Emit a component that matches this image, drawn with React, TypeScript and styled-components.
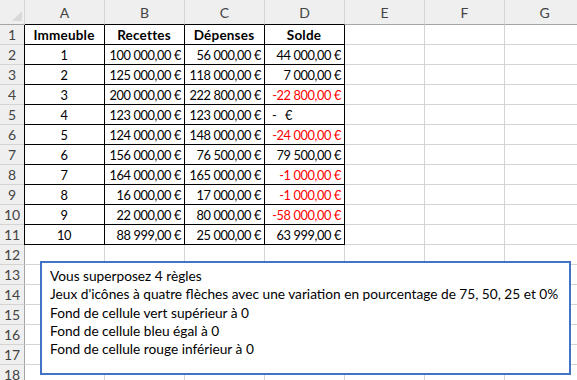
import { createGlobalStyle, styled } from 'styled-components';

const GlobalStyle = createGlobalStyle`
  html, body {
    margin: 0;
    padding: 0;
    background: #ffffff;
  }
  body {
    font-family: Lato, "Liberation Sans", sans-serif;
    overflow: hidden;
  }
`;

const COLS = ['A', 'B', 'C', 'D', 'E', 'F', 'G'];
const ROW_COUNT = 18;

type Value = { text: string; red?: boolean; dash?: boolean };

const header = ['Immeuble', 'Recettes', 'Dépenses', 'Solde'];

const data: Value[][] = [
  [{ text: '1' }, { text: '100 000,00 €' }, { text: '56 000,00 €' }, { text: '44 000,00 €' }],
  [{ text: '2' }, { text: '125 000,00 €' }, { text: '118 000,00 €' }, { text: '7 000,00 €' }],
  [{ text: '3' }, { text: '200 000,00 €' }, { text: '222 800,00 €' }, { text: '-22 800,00 €', red: true }],
  [{ text: '4' }, { text: '123 000,00 €' }, { text: '123 000,00 €' }, { text: '-   €', dash: true }],
  [{ text: '5' }, { text: '124 000,00 €' }, { text: '148 000,00 €' }, { text: '-24 000,00 €', red: true }],
  [{ text: '6' }, { text: '156 000,00 €' }, { text: '76 500,00 €' }, { text: '79 500,00 €' }],
  [{ text: '7' }, { text: '164 000,00 €' }, { text: '165 000,00 €' }, { text: '-1 000,00 €', red: true }],
  [{ text: '8' }, { text: '16 000,00 €' }, { text: '17 000,00 €' }, { text: '-1 000,00 €', red: true }],
  [{ text: '9' }, { text: '22 000,00 €' }, { text: '80 000,00 €' }, { text: '-58 000,00 €', red: true }],
  [{ text: '10' }, { text: '88 999,00 €' }, { text: '25 000,00 €' }, { text: '63 999,00 €' }],
];

const notes = [
  'Vous superposez 4 règles',
  "Jeux d'icônes à quatre flèches avec une variation en pourcentage de 75, 50, 25 et 0%",
  'Fond de cellule vert supérieur à 0',
  'Fond de cellule bleu égal à 0',
  'Fond de cellule rouge inférieur à 0',
];

const App = () => {
  const rows = Array.from({ length: ROW_COUNT }, (_, i) => i + 1);

  const renderCell = (row: number, col: number) => {
    const inTable = row <= 11 && col <= 3;
    const key = `${row}-${col}`;
    if (row === 1 && col <= 3) {
      return (
        <Cell key={key} $boxed $align="center" $bold $leftEdge={col === 0}>
          {header[col]}
        </Cell>
      );
    }
    if (inTable) {
      const v = data[row - 2][col];
      return (
        <Cell
          key={key}
          $boxed
          $align={col === 0 ? 'center' : v.dash ? 'left' : 'right'}
          $red={v.red}
          $leftEdge={col === 0}
        >
          {v.text}
        </Cell>
      );
    }
    return <Cell key={key} $boxed={false} $align="left" />;
  };

  return (
    <>
      <GlobalStyle />
      <Sheet>
        <Corner>
          <CornerMark />
        </Corner>
        {COLS.map((c, i) => (
          <ColHeader key={c} $dark={i <= 3}>
            {c}
          </ColHeader>
        ))}
        {rows.map((r) => [
          <RowHeader key={`h${r}`}>{r}</RowHeader>,
          ...COLS.map((_, c) => renderCell(r, c)),
        ])}
        <TextBox>
          {notes.map((n) => (
            <NoteLine key={n}>{n}</NoteLine>
          ))}
        </TextBox>
      </Sheet>
    </>
  );
};

export default App;

const Sheet = styled.div`
  position: relative;
  display: grid;
  grid-template-columns: 25px repeat(7, 80px);
  grid-template-rows: 25px repeat(18, 20px);
  width: 585px;
  color: #000000;
`;

const Corner = styled.div`
  position: relative;
  background: #efefef;
  border-right: 1px solid #d4d4d4;
  border-bottom: 1px solid #a5a5a5;
  box-sizing: border-box;
`;

const CornerMark = styled.div`
  position: absolute;
  right: 2px;
  bottom: 3px;
  width: 0;
  height: 0;
  border-left: 10px solid transparent;
  border-bottom: 10px solid #d9d9d9;
`;

const ColHeader = styled.div<{ $dark: boolean }>`
  display: flex;
  align-items: center;
  justify-content: center;
  box-sizing: border-box;
  background: #efefef;
  border-right: 1px solid #d4d4d4;
  border-bottom: 1px solid ${(p) => (p.$dark ? '#000000' : '#a5a5a5')};
  color: #444444;
  font-size: 14px;
  padding-top: 1px;
`;

const RowHeader = styled.div`
  display: flex;
  align-items: center;
  justify-content: center;
  box-sizing: border-box;
  background: #efefef;
  border-right: 1px solid #a5a5a5;
  border-bottom: 1px solid #d4d4d4;
  color: #444444;
  font-size: 14px;
`;

const Cell = styled.div<{
  $boxed: boolean;
  $align: 'left' | 'center' | 'right';
  $bold?: boolean;
  $red?: boolean;
  $leftEdge?: boolean;
}>`
  display: flex;
  align-items: center;
  justify-content: ${(p) => (p.$align === 'center' ? 'center' : p.$align === 'right' ? 'flex-end' : 'flex-start')};
  box-sizing: border-box;
  padding: 0 3px 0 ${(p) => (p.$align === 'left' ? '7px' : '2px')};
  border-right: 1px solid ${(p) => (p.$boxed ? '#000000' : '#d4d4d4')};
  border-bottom: 1px solid ${(p) => (p.$boxed ? '#000000' : '#d4d4d4')};
  box-shadow: ${(p) => (p.$leftEdge ? '-1px 0 0 #000000' : 'none')};
  font-size: ${(p) => (p.$bold ? '13.5px' : '12.8px')};
  letter-spacing: ${(p) => (p.$bold ? '0.2px' : '-0.4px')};
  font-weight: ${(p) => (p.$bold ? 700 : 400)};
  color: ${(p) => (p.$red ? '#ff0000' : '#000000')};
  white-space: pre;
  overflow: hidden;
`;

const TextBox = styled.div`
  position: absolute;
  left: 40px;
  top: 261px;
  width: 531px;
  height: 114px;
  box-sizing: border-box;
  border: 2px solid #4472c4;
  background: #ffffff;
  padding: 4px 8px;
  display: flex;
  flex-direction: column;
`;

const NoteLine = styled.div`
  font-size: 13.7px;
  line-height: 18.3px;
  color: #000000;
  white-space: nowrap;
`;
